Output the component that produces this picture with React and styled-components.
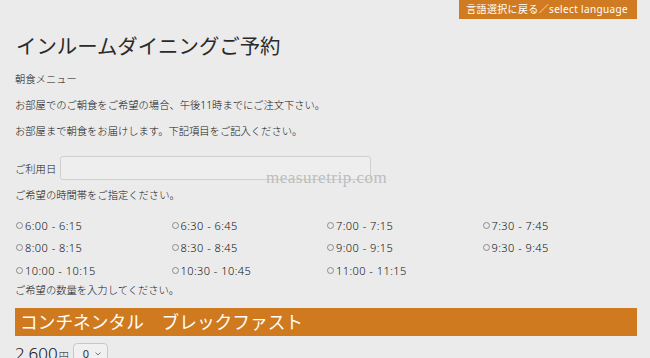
import React from "react";
import styled, { createGlobalStyle } from "styled-components";

const Global = createGlobalStyle`
  html, body { margin: 0; padding: 0; background: #ebebeb; }
  body {
    font-family: "Noto Sans", "Noto Sans CJK JP", sans-serif;
    color: #333;
    overflow: hidden;
  }
`;

const Page = styled.div`
  position: relative;
  width: 622px;
  margin: 0 13px 0 15px;
`;

const TopBar = styled.div`
  display: flex;
  justify-content: flex-end;
`;

const LangButton = styled.div`
  height: 19px;
  padding: 0 9px 0 7px;
  background: #d07b22;
  color: #fff;
  font-size: 10px;
  letter-spacing: 0.35px;
  line-height: 18px;
  white-space: nowrap;
`;

const Title = styled.h1`
  margin: 14px 0 0 1px;
  font-size: 20.4px;
  font-weight: 400;
  line-height: 26px;
  color: #2a2a2a;
`;

const Para = styled.p`
  margin: ${(p) => p.$mt ?? 12}px 0 0;
  font-size: 10.3px;
  font-weight: 300;
  line-height: 14px;
  color: #111;
  white-space: nowrap;
`;

const DateRow = styled.div`
  display: flex;
  align-items: center;
  gap: 4px;
  margin-top: 18px;
  height: 24px;
  font-size: 10.3px;
  font-weight: 300;
  color: #111;
`;

const DateInput = styled.div`
  width: 309px;
  height: 22px;
  border: 1px solid #cfcfcf;
  border-radius: 3px;
  background: #eeeeee;
`;

const Grid = styled.div`
  display: grid;
  grid-template-columns: repeat(4, 155.5px);
  grid-auto-rows: 22.5px;
  margin-top: 12px;
`;

const Option = styled.label`
  display: flex;
  align-items: center;
  gap: 2px;
  font-size: 11px;
  letter-spacing: 0.45px;
  font-weight: 300;
  color: #111;
  white-space: nowrap;
`;

const Radio = styled.span`
  width: 7px;
  height: 7px;
  box-sizing: border-box;
  margin-left: 1px;
  border: 1px solid #8a8a8a;
  border-radius: 50%;
`;

const Bar = styled.div`
  margin-top: 11px;
  height: 28px;
  background: #d07a20;
  color: #fff;
  font-size: 17.7px;
  font-weight: 400;
  line-height: 28px;
  padding-left: 5px;
  white-space: pre;
`;

const PriceRow = styled.div`
  display: flex;
  align-items: center;
  gap: 4px;
  margin-top: 6px;
  height: 24px;
`;

const Price = styled.span`
  font-size: 17px;
  font-weight: 300;
  color: #111;
`;

const Yen = styled.span`
  font-size: 10px;
  margin-left: 1px;
`;

const Select = styled.div`
  display: flex;
  align-items: center;
  gap: 6px;
  height: 20px;
  padding: 0 6px 0 9px;
  border: 1px solid #c8c8c8;
  border-radius: 4px;
  background: #f0f0f0;
  font-size: 11px;
  color: #333;
`;

const Watermark = styled.div`
  position: absolute;
  left: 251px;
  top: 168px;
  font-family: "Liberation Serif", "DejaVu Serif", serif;
  font-size: 17px;
  letter-spacing: 0.5px;
  color: #bdbdbd;
  pointer-events: none;
`;

const times = [
  "6:00 - 6:15", "6:30 - 6:45", "7:00 - 7:15", "7:30 - 7:45",
  "8:00 - 8:15", "8:30 - 8:45", "9:00 - 9:15", "9:30 - 9:45",
  "10:00 - 10:15", "10:30 - 10:45", "11:00 - 11:15",
];

export default function App() {
  return (
    <>
      <Global />
      <Page>
        <TopBar>
          <LangButton>言語選択に戻る／select language</LangButton>
        </TopBar>
        <Title>インルームダイニングご予約</Title>
        <Para $mt={13}>朝食メニュー</Para>
        <Para>お部屋でのご朝食をご希望の場合、午後11時までにご注文下さい。</Para>
        <Para>お部屋まで朝食をお届けします。下記項目をご記入ください。</Para>
        <DateRow>
          <span>ご利用日</span>
          <DateInput />
        </DateRow>
        <Para $mt={8}>ご希望の時間帯をご指定ください。</Para>
        <Grid>
          {times.map((t) => (
            <Option key={t}>
              <Radio />
              {t}
            </Option>
          ))}
        </Grid>
        <Para $mt={1}>ご希望の数量を入力してください。</Para>
        <Bar>コンチネンタル　ブレックファスト</Bar>
        <PriceRow>
          <Price>
            2,600<Yen>円</Yen>
          </Price>
          <Select>
            <span>0</span>
            <svg width="6" height="4" viewBox="0 0 6 4">
              <path d="M0.5 0.5 L3 3 L5.5 0.5" stroke="#777" strokeWidth="1" fill="none" />
            </svg>
          </Select>
        </PriceRow>
        <Watermark>measuretrip.com</Watermark>
      </Page>
    </>
  );
}
